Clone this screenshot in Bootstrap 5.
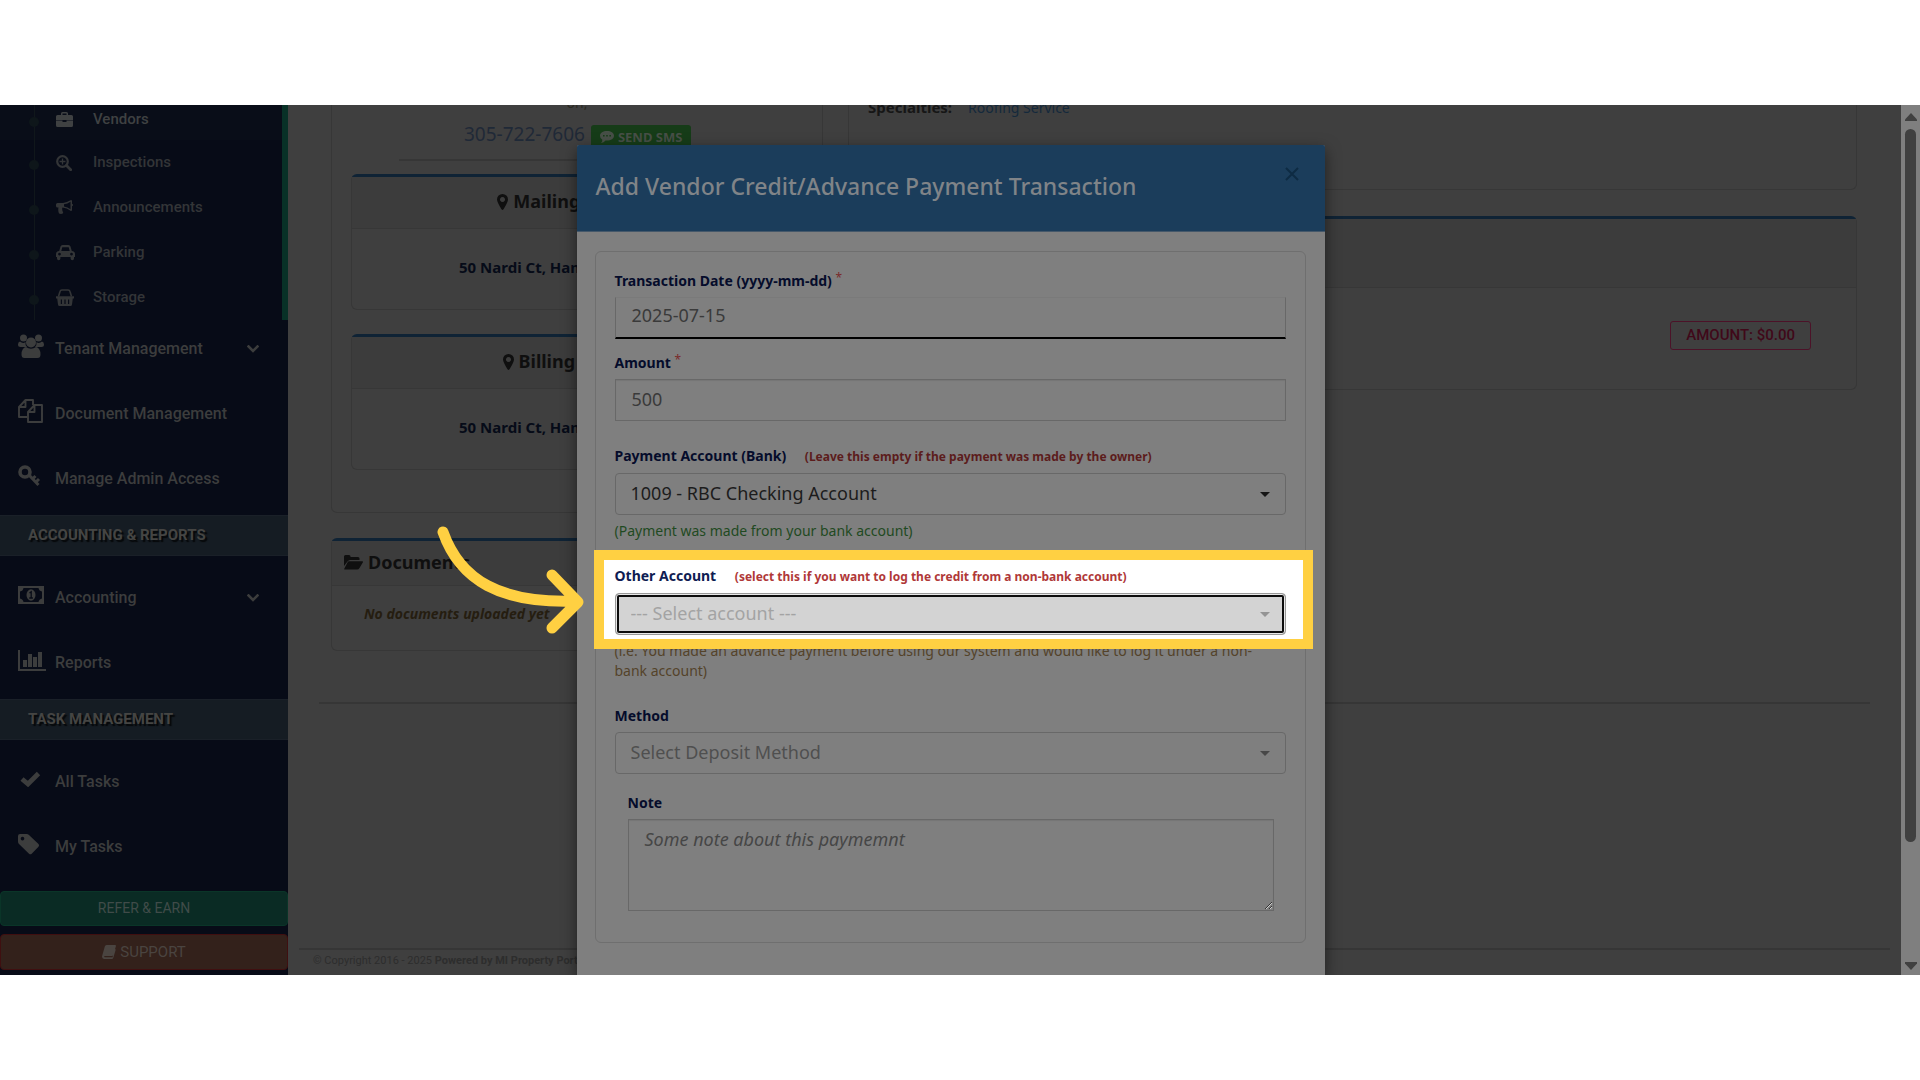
<!DOCTYPE html>
<html lang="en">
<head>
<meta charset="utf-8">
<meta name="viewport" content="width=device-width, initial-scale=1">
<title>Add Vendor Credit/Advance Payment Transaction</title>
<link href="https://cdn.jsdelivr.net/npm/bootstrap@5.3.0/dist/css/bootstrap.min.css" rel="stylesheet">
<style>
  :root { --page: #3f3f3f; --line: #373737; --sheet: #7f7f7f; --navy: #070b17; --gold: #ffd042; }
  body { background: #fff; font-family: "Noto Sans", sans-serif; padding: 105px 0; height: 100vh; }
  a { text-decoration: none; color: inherit; }
  svg { flex: none; fill: currentColor; }
  .stage { height: 100%; background: var(--page); overflow: hidden; position: relative; }

  /* sidebar */
  .side { width: 288px; flex: none; background: var(--navy); color: #3c3d3d; font-family: Roboto, sans-serif; font-size: 16px; font-weight: 500; overflow: hidden; }
  .sub-menu { border-right: 6px solid #083127; font-size: 15px; color: #333537; position: relative; margin-top: -10px; }
  .sub-menu::before { content: ""; position: absolute; left: 34px; top: 0; bottom: 0; width: 1px; background: #10171b; }
  .sub-menu a { height: 45px; padding-left: 29px; }
  .sub-menu a.current { background: #090d18; color: #3f4142; }
  .bullet { width: 10px; height: 10px; border-radius: 50%; background: #0e161a; margin-right: 17px; position: relative; top: 2px; }
  .sub-icon { width: 37px; display: flex; }
  .side-link { height: 65px; padding: 0 29px 7px 18px; }
  .side-icon { width: 37px; display: flex; padding-bottom: 6px; }
  .side-head { height: 41px; margin-bottom: 13px; padding-left: 28px; background: #151c23; border: solid #1a2028; border-width: 1px 0; font-size: 15px; font-weight: 700; line-height: 39px; text-shadow: 2px 2px 1px #06080a; color: #454543; }
  .side-btn { height: 36px; border-radius: 4px; padding: 0; font-size: 15px; font-family: Roboto, sans-serif; --bs-btn-color: #404b49; }
  .btn-refer { height: 35px; font-size: 14px; background: #0a2b24; border-color: #0a3528; color: #404b49; }
  .btn-help { background: #33211b; border-color: #3f0f10; color: #4a4440; }

  /* page behind the dialog */
  .vendor-page { padding: 0 44px 0 43px; }
  .left-col { width: 492px; flex: none; }
  .panel { border: 1px solid var(--line); border-radius: 6px; }
  .panel-open { border-top: 0; border-radius: 0 0 6px 6px; }
  .panel-blue { border-top: 3px solid #0f2335; }
  .panel-blue > header { background: #3c3c3c; border-bottom: 1px solid var(--line); color: #0f0f0f; font-size: 18px; font-weight: 700; gap: 5px; }
  .contact-panel { height: 408px; padding: 0 19px; }
  .contact { height: 69px; color: #1f2937; font-size: 19px; overflow: hidden; }
  .contact-note { font-size: 14px; line-height: 16px; margin-top: -10px; color: #2b2a22; }
  .phone-row { padding-left: 113px; gap: 6px; height: 34px; margin-top: 6px; }
  .btn-sms { background: #163c18; color: #474f47; border-radius: 3px; font-size: 13px; font-weight: 700; line-height: 16px; padding: 3px 9px 1px; height: 22px; border: 0; margin-top: 3px; }
  .thin-line { border: 0; border-top: 2px solid #363636; opacity: 1; }
  .page-line { margin: 51px 31px 0; }
  .addr header { height: 52px; padding-bottom: 2px; }
  .addr .addr-text { height: 80px; color: #060b18; font-size: 15px; font-weight: 700; padding: 0 0 4px 107px; }
  .docs-panel { margin-top: 25px; }
  .docs-panel header { height: 45px; padding: 0 0 2px 12px; }
  .doc-text { color: #251d10; font-size: 14px; font-weight: 700; height: 64px; padding: 0 0 9px 32px; }
  .right-col { margin-left: 25px; }
  .spec { height: 85px; font-size: 15px; line-height: 20px; padding: 0 19px; margin-bottom: 26px; overflow: hidden; }
  .spec > div { margin-top: -8px; }
  .spec strong { color: #161616; }
  .spec a { color: #14293c; font-size: 14px; }
  .credit-panel header { height: 69px; }
  .credit-row { height: 101px; padding: 0 45px 7px; }
  .badge-amount { border: 1px solid #4c1228; color: #400819; font: 500 15px Roboto, sans-serif; padding: 0 15px; height: 29px; line-height: 27px; border-radius: 3px; }
  .site-foot { font: 400 11px Roboto, sans-serif; color: #2d2d2d; margin: 0 11px; padding: 4px 14px 0; border-top: 2px solid #363636; height: 27px; }

  /* scrollbar */
  .scroll-track { width: 19px; flex: none; background: #7f7f7f; color: #404040; padding: 8px 0 5px; }
  .scroll-thumb { width: 11px; background: #404040; border-radius: 6px; height: 713px; }

  /* dialog */
  .dialog-layer { position: absolute; inset: 0 19px 0 0; padding-top: 40px; overflow: hidden; }
  .dialog-box { width: 748px; margin: 0 auto; height: 100%; background: var(--sheet); box-shadow: 0 5px 15px rgba(0,0,0,.5); border-radius: 2px 2px 0 0; }
  .dialog-head { background: #1b3d5b; border-bottom: 1px solid #45586a; height: 87px; padding: 0 26px 2px 19px; border-radius: 2px 2px 0 0; }
  .dialog-head h1 { font-size: 23px; font-weight: 500; color: #808488; }
  .close-btn { background: none; border: 0; padding: 0; color: #0e2b43; line-height: 0; margin-top: 22px; }
  .dialog-body { padding: 19px 19px 0 18px; }
  .form-frame { border: 1px solid #6f6f6f; border-radius: 6px; padding: 19px 19px 31px; }
  .form-frame label { display: block; font-size: 14px; font-weight: 700; line-height: 20px; margin-bottom: 6px; color: #050c2b; }
  .field-gap { padding-top: 25px; }
  .field-gap-sm { padding-top: 14px; }
  .note-gap { padding: 19px 12px 0 13px; }
  .req { color: #7a2a2a; font-weight: 400; font-size: 12px; line-height: 0; vertical-align: 4px; }
  .hint { color: #5c1c1c; font-size: 12px; margin-left: 15px; }
  .form-frame .form-control, .form-frame .form-select { height: 42px; border: 1px solid #686868; border-radius: 0; background-color: transparent; font-size: 18px; line-height: 26px; padding: 6px 16px 8px; color: #3a3a3a; box-shadow: inset 0 1px 1px rgba(0,0,0,.08); }
  .form-frame .form-select { border-radius: 4px; padding-left: 15px; background-position: right 15px center; background-size: 10px 5px; color: #1c1c1c; box-shadow: none;
    background-image: url("data:image/svg+xml,%3Csvg xmlns='http://www.w3.org/2000/svg' viewBox='0 0 10 5'%3E%3Cpath d='M0 0h10L5 5z' fill='%23161616'/%3E%3C/svg%3E"); }
  .form-frame .form-select.pale { color: #4f4f4f; background-image: url("data:image/svg+xml,%3Csvg xmlns='http://www.w3.org/2000/svg' viewBox='0 0 10 5'%3E%3Cpath d='M0 0h10L5 5z' fill='%23484848'/%3E%3C/svg%3E"); }
  .form-frame .date-box { border-top-color: #7a7a7a; border-bottom: 2px solid #000; box-shadow: none; padding: 4px 16px 9px; }
  .form-frame textarea.form-control { height: 92px; font-style: italic; }
  .form-frame textarea::placeholder { color: #464646; opacity: 1; }
  .help { font-size: 14px; line-height: 20px; }
  .help-ok { color: #1f4a22; margin-top: 6px; }
  .help-note { color: #54432a; margin-top: 2px; padding-right: 19px; }
  .spot { position: relative; z-index: 1; background: #fff; outline: 10px solid var(--gold); margin: 19px -17px 0 -11px; padding: 6px 17px 4px 11px; }
  .spot label { color: #0f1c52; }
  .spot .hint { color: #b03838; }
  .spot .form-select.pale { color: #a3a3a3; background-color: #d3d3d3; border-color: #999; box-shadow: inset 0 0 0 1px #e8e8e8, inset 0 0 0 3px #0d0d0d;
    background-image: url("data:image/svg+xml,%3Csvg xmlns='http://www.w3.org/2000/svg' viewBox='0 0 10 5'%3E%3Cpath d='M0 0h10L5 5z' fill='%23949494'/%3E%3C/svg%3E"); }
  .pointer { position: absolute; left: -169px; top: -35px; }
</style>
</head>
<body>
<div class="stage d-flex">

  <nav class="side d-flex flex-column">
    <div class="sub-menu">
      <a href="#" class="current d-flex align-items-center pt-1"><span class="bullet"></span><span class="sub-icon"><svg width="17" height="16" viewBox="0 0 17 16"><path d="M5 3V1.500Q5 0 6.500 0h4Q12 0 12 1.500V3h3.500Q17 3 17 4.500V8H0V4.500Q0 3 1.500 3zM6.500 3h4V1.500h-4zM0 8.600h6.500v1.500h4V8.600H17v4.900q0 1.500-1.500 1.500h-14Q0 15 0 13.500z"/></svg></span>Vendors</a>
      <a href="#" class="d-flex align-items-center"><span class="bullet"></span><span class="sub-icon"><svg width="16" height="16" viewBox="0 0 16 16"><g fill="none" stroke="currentColor"><circle cx="6.500" cy="6.500" r="5.300" stroke-width="2.200"/><path d="M10.500 10.500l4.200 4.200" stroke-width="2.800" stroke-linecap="round"/><path d="M3.500 6.500h6M6.500 3.500v6" stroke-width="1.300"/></g></svg></span>Inspections</a>
      <a href="#" class="d-flex align-items-center"><span class="bullet"></span><span class="sub-icon"><svg width="17" height="16" viewBox="0 0 17 16"><path fill-rule="evenodd" d="M1.500 3H7q4-.5 7.500-2.800Q15.500-.4 16 .8v3q1 .3 1 1.200T16 6.200v4q-.5 1.200-1.500.6Q11 8 6.500 7.500q-1 2 .8 5.500-1.800 1.500-4.300.5Q1.800 10.500 2.500 7.500h-1Q0 7.500 0 6V4.500Q0 3 1.500 3zM8 4.300v2.300q3.500.6 6.500 2.700V1.700Q11.500 3.900 8 4.300z"/></svg></span>Announcements</a>
      <a href="#" class="d-flex align-items-center"><span class="bullet"></span><span class="sub-icon"><svg width="19" height="16" viewBox="0 0 19 16"><path fill-rule="evenodd" d="M4.500 1.500Q5 0 6.500 0h6Q14 0 14.500 1.500L15.800 6Q19 6.300 19 9v3h-1v1.500a1.700 1.700 0 0 1-3.400 0V12H4.400v1.500a1.700 1.700 0 0 1-3.400 0V12H0V9q0-2.700 3.200-3zM5.300 6h8.400l-1-3.700H6.300zM3.500 7.700a1.400 1.400 0 1 0 .01 0zm12 0a1.400 1.400 0 1 0 .01 0z"/></svg></span>Parking</a>
      <a href="#" class="d-flex align-items-center"><span class="bullet"></span><span class="sub-icon"><svg width="18" height="17" viewBox="0 0 18 17"><path fill-rule="evenodd" d="M0 7.200h18v2.300h-1.200L16 15.500q-.2 1.500-1.500 1.500h-11Q2.200 17 2 15.500L1.200 9.500H0zM4.800 10.500v4.500h1.200v-4.500zm3.600 0v4.500h1.200v-4.500zm3.600 0v4.500h1.200v-4.500z"/><path d="M2.500 7.500L4 2.500Q4.400 1 6 1h6q1.600 0 2 1.500l1.500 5M7 1h4" fill="none" stroke="currentColor" stroke-width="1.600"/></svg></span>Storage</a>
    </div>
    <a href="#" class="side-link d-flex align-items-center"><span class="side-icon"><svg width="26" height="24" viewBox="0 0 26 24"><circle cx="5.500" cy="4" r="3.500"/><circle cx="20.500" cy="4" r="3.500"/><path d="M2 7.500Q5 10 7.500 8q-.5 3 1.500 5H2.500Q0 13 0 10.500 0 8 2 7.500zM24 7.500Q21 10 18.500 8q.5 3-1.500 5h6.500q2.500 0 2.500-2.500Q26 8 24 7.500z"/><circle cx="13" cy="8.500" r="5"/><path d="M8 13q5 3.500 10 0 4.500 1 4.500 7.500 0 3.500-3 3.500h-13q-3 0-3-3.500Q3.500 14 8 13z"/></svg></span>Tenant Management<svg class="ms-auto" width="12" height="9" viewBox="0 0 12 9"><path d="M1.500 1.500L6 6l4.500-4.500" fill="none" stroke="currentColor" stroke-width="2.600" stroke-linecap="square"/></svg></a>
    <a href="#" class="side-link d-flex align-items-center"><span class="side-icon"><svg width="25" height="24" viewBox="0 0 25 24"><g fill="none" stroke="currentColor" stroke-width="1.900" stroke-linejoin="round"><path d="M9 18H1V8l6.500-7H15v5M7.500 1v7H1M10 13v10h14V6h-7.500zM16.500 6v7H10"/></g></svg></span>Document Management</a>
    <a href="#" class="side-link d-flex align-items-center"><span class="side-icon"><svg width="23" height="22" viewBox="0 0 23 22"><g fill="none" stroke="currentColor"><circle cx="7" cy="7" r="5" stroke-width="3.600"/><path d="M10.500 9.500L20.500 20M14.500 14l3-3M17.500 17.500l3.500-3.500" stroke-width="3"/></g></svg></span>Manage Admin Access</a>
    <div class="side-head">ACCOUNTING &amp; REPORTS</div>
    <a href="#" class="side-link d-flex align-items-center"><span class="side-icon"><svg width="26" height="18" viewBox="0 0 26 18"><path fill-rule="evenodd" d="M0 0h26v18H0zM5.500 2Q5 5 2 5.500v7Q5 13 5.500 16h15q.5-3 3.500-3.500v-7Q21 5 20.500 2z"/><ellipse cx="13" cy="9" rx="4.500" ry="5.800"/><path d="M11.500 7l1.700-1.300V12M11.300 12h3.600" stroke="#070b17" stroke-width="1.300" fill="none"/></svg></span>Accounting<svg class="ms-auto" width="12" height="9" viewBox="0 0 12 9"><path d="M1.500 1.500L6 6l4.500-4.500" fill="none" stroke="currentColor" stroke-width="2.600" stroke-linecap="square"/></svg></a>
    <a href="#" class="side-link d-flex align-items-center"><span class="side-icon"><svg width="28" height="21" viewBox="0 0 28 21"><path d="M0 0h2v19h26v2H0zM5 10h4v7H5zM10 4h4v13h-4zM15 7h4v10h-4zM20 2h4v15h-4z"/></svg></span>Reports</a>
    <div class="side-head">TASK MANAGEMENT</div>
    <a href="#" class="side-link d-flex align-items-center"><span class="side-icon"><svg width="24" height="16" viewBox="0 0 24 16"><path d="M4 8l6 5L20.500 2.500" fill="none" stroke="currentColor" stroke-width="4.800"/></svg></span>All Tasks</a>
    <a href="#" class="side-link d-flex align-items-center"><span class="side-icon"><svg width="22" height="21" viewBox="0 0 22 21"><path fill-rule="evenodd" d="M0 2Q0 0 2 0h6.500Q10 0 11 1l9.500 9q1.300 1.300 0 2.700l-6.800 7q-1.300 1.300-2.700 0L1 10Q0 9 0 7.500zm4.500.8a1.800 1.800 0 1 0 .01 0z"/></svg></span>My Tasks</a>
    <div class="d-flex flex-column gap-2 pt-2">
      <button type="button" class="btn side-btn btn-refer">REFER &amp; EARN</button>
      <button type="button" class="btn side-btn btn-help d-flex align-items-center justify-content-center gap-1"><svg width="14" height="14" viewBox="0 0 14 14"><path d="M4.500 0H13q1.300 0 .9 1.300L11.300 10q-.3 1-1.500 1H2.500q-.8.800.3 1.300h7.700l2.500-8.500.7 1-2.400 8q-.4 1.200-1.500 1.200H2Q-.3 13.500.1 11L2.800 1.500Q3.200 0 4.500 0z"/></svg>SUPPORT</button>
    </div>
  </nav>

  <main class="flex-grow-1 d-flex flex-column">
    <div class="vendor-page d-flex">
      <div class="left-col">
        <section class="panel panel-open contact-panel">
          <div class="contact">
            <div class="contact-note text-center">on,</div>
            <div class="phone-row d-flex align-items-center"><a href="#">305-722-7606</a><button type="button" class="btn btn-sms d-flex align-items-center gap-1"><svg width="14" height="12" viewBox="0 0 14 12"><path fill-rule="evenodd" d="M7 0c4 0 7 2 7 4.800S11 9.600 7 9.600q-1 0-1.500-.1Q4 11.500 1 12q1.500-1.500 1.300-3.200Q0 7.500 0 4.800C0 2 3 0 7 0zM3 4v1.600h1.600V4zm3.200 0v1.600h1.600V4zm3.200 0v1.600H11V4z"/></svg>SEND SMS</button></div>
            <hr class="thin-line mx-5 mt-2 mb-0">
          </div>
          <section class="panel panel-blue addr">
            <header class="d-flex align-items-center justify-content-center"><svg width="11" height="16" viewBox="0 0 11 16"><path fill-rule="evenodd" d="M5.500 0A5.500 5.500 0 0 1 11 5.500Q11 8 6.500 15.300q-1 1.300-2 0Q0 8 0 5.500A5.500 5.500 0 0 1 5.500 0zm0 3a2.500 2.500 0 1 0 .01 0z"/></svg>Mailing Address</header>
            <div class="addr-text d-flex align-items-center">50 Nardi Ct, Hamilton</div>
          </section>
          <section class="panel panel-blue addr mt-4">
            <header class="d-flex align-items-center justify-content-center"><svg width="11" height="16" viewBox="0 0 11 16"><path fill-rule="evenodd" d="M5.500 0A5.500 5.500 0 0 1 11 5.500Q11 8 6.500 15.300q-1 1.300-2 0Q0 8 0 5.500A5.500 5.500 0 0 1 5.500 0zm0 3a2.500 2.500 0 1 0 .01 0z"/></svg>Billing Address</header>
            <div class="addr-text d-flex align-items-center">50 Nardi Ct, Hamilton</div>
          </section>
        </section>
        <section class="panel panel-blue docs-panel">
          <header class="d-flex align-items-center"><svg width="19" height="15" viewBox="0 0 19 15"><path d="M0 11V1.500Q0 0 1.500 0H5q1.500 0 1.500 1.500V2H14q1.500 0 1.500 1.500V5H6Q4.500 5 3.500 6.500zM5 6.200h13q1.500 0 .8 1.200L15.500 13q-.8 1.500-2.500 1.500H1Q-.3 14.500.5 13.200L3.500 7.500Q4 6.200 5 6.200z"/></svg>Documents</header>
          <div class="doc-text d-flex align-items-center fst-italic">No documents uploaded yet</div>
        </section>
      </div>
      <div class="right-col flex-grow-1">
        <section class="panel panel-open spec">
          <div><strong>Specialties:</strong><a href="#" class="ms-3">Roofing Service</a></div>
        </section>
        <section class="panel panel-blue credit-panel">
          <header></header>
          <div class="credit-row d-flex justify-content-end align-items-center"><span class="badge-amount">AMOUNT: $0.00</span></div>
        </section>
      </div>
    </div>
    <hr class="thin-line page-line">
    <footer class="site-foot mt-auto">© Copyright 2016 - 2025 <strong>Powered by MI Property Portal</strong></footer>
  </main>

  <div class="scroll-track d-flex flex-column align-items-center">
    <svg width="12" height="8" viewBox="0 0 12 8"><path d="M6 0l6 6.500V8H0V6.500z"/></svg>
    <div class="scroll-thumb mt-2"></div>
    <svg class="mt-auto" width="12" height="8" viewBox="0 0 12 8"><path d="M6 8l6-6.500V0H0v1.500z"/></svg>
  </div>

  <div class="dialog-layer">
    <div class="dialog-box" role="dialog" aria-labelledby="dlgTitle">
      <div class="dialog-head d-flex justify-content-between">
        <h1 id="dlgTitle" class="m-0 align-self-center">Add Vendor Credit/Advance Payment Transaction</h1>
        <button type="button" class="close-btn align-self-start" aria-label="Close"><svg width="14" height="14" viewBox="0 0 14 14"><path d="M1 1l12 12M13 1L1 13" stroke="currentColor" stroke-width="2"/></svg></button>
      </div>
      <div class="dialog-body">
        <form class="form-frame">
          <div>
            <label for="date">Transaction Date (yyyy-mm-dd) <span class="req">*</span></label>
            <input id="date" type="text" class="form-control date-box" value="2025-07-15">
          </div>
          <div class="field-gap-sm">
            <label for="amount">Amount <span class="req">*</span></label>
            <input id="amount" type="text" class="form-control" value="500">
          </div>
          <div class="field-gap">
            <label for="bank">Payment Account (Bank) <span class="hint">(Leave this empty if the payment was made by the owner)</span></label>
            <select id="bank" class="form-select"><option>1009 - RBC Checking Account</option></select>
            <div class="help help-ok">(Payment was made from your bank account)</div>
          </div>
          <div class="spot">
            <label for="other">Other Account <span class="hint">(select this if you want to log the credit from a non-bank account)</span></label>
            <select id="other" class="form-select pale"><option>--- Select account ---</option></select>
            <svg class="pointer" width="160" height="115" viewBox="435 525 160 115"><path d="M443 532C460 580 500 604 577 601M552 575l26 27-26 26" fill="none" stroke="#ffd042" stroke-width="11" stroke-linecap="round" stroke-linejoin="round"/></svg>
          </div>
          <div class="help help-note">(i.e. You made an advance payment before using our system and would like to log it under a non-bank account)</div>
          <div class="field-gap">
            <label for="method">Method</label>
            <select id="method" class="form-select pale"><option>Select Deposit Method</option></select>
          </div>
          <div class="note-gap">
            <label for="note">Note</label>
            <textarea id="note" class="form-control" placeholder="Some note about this paymemnt"></textarea>
          </div>
        </form>
      </div>
    </div>
  </div>
</div>
<script src="https://cdn.jsdelivr.net/npm/bootstrap@5.3.0/dist/js/bootstrap.bundle.min.js"></script>
</body>
</html>
